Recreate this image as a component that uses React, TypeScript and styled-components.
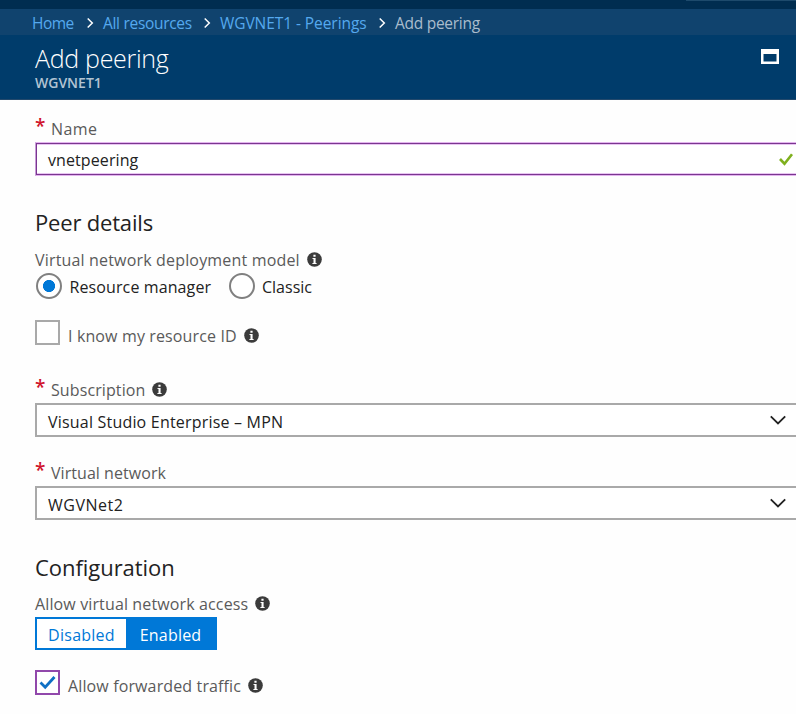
import React from "react";
import styled, { createGlobalStyle, css } from "styled-components";

const GlobalStyle = createGlobalStyle`
  * { box-sizing: border-box; }
  body { margin: 0; background: #fff; overflow: hidden; }
`;

const Page = styled.div`
  width: 100%;
  height: 714px;
  overflow: hidden;
  background: #fefefe;
  color: #222;
  font: 400 16px/24px "Open Sans", "Noto Sans", sans-serif;
`;

const TopBar = styled.div`
  display: flex;
  justify-content: flex-end;
  height: 9px;
  background: #002d50;
`;

const SearchEdge = styled.div`
  width: 110px;
  height: 1px;
  background: #1d4a6c;
`;

const Breadcrumbs = styled.nav`
  display: flex;
  align-items: center;
  height: 26px;
  padding: 2px 0 0 32px;
  background: #10436e;
  font-size: 15.5px;
  line-height: 24px;
  white-space: nowrap;
`;

const Crumb = styled.span<{ $width: number; $tracking: number; $current?: boolean }>`
  flex: none;
  width: ${(p) => p.$width}px;
  color: ${(p) => (p.$current ? "#a9bccd" : "#55a9ee")};
  letter-spacing: ${(p) => p.$tracking}px;
`;

const CrumbArrow = styled.svg`
  flex: none;
  width: 8px;
  height: 12px;
  margin: 0 9px 0 11px;
`;

const BladeHeader = styled.header`
  display: flex;
  justify-content: space-between;
  height: 65px;
  padding: 8px 17px 0 35px;
  background: #003c6b;
  border-bottom: 1px solid #23496c;
`;

const Title = styled.h1`
  margin: 0;
  color: #fff;
  font-size: 25px;
  font-weight: 300;
  line-height: 30px;
  letter-spacing: -0.3px;
`;

const Subtitle = styled.div`
  color: #b3c4d3;
  font-size: 14px;
  font-weight: 600;
  line-height: 19px;
`;

const WindowIcon = styled.svg`
  width: 18px;
  height: 15px;
  margin-top: 6px;
`;

const Form = styled.main`
  padding: 17px 0 0 35px;
`;

const Label = styled.div<{ $tracking?: number }>`
  display: flex;
  height: 24px;
  color: #5a5a5a;
  letter-spacing: ${(p) => p.$tracking ?? 0}px;
  white-space: nowrap;
`;

const Required = styled.span`
  width: 16px;
  color: #d0142c;
  font-size: 19px;
  font-weight: 600;
  line-height: 19px;
  letter-spacing: 0;
`;

const Info = styled.svg`
  flex: none;
  width: 15px;
  height: 15px;
  margin: 4px 0 0 7px;
`;

const focusedFrame = css`
  padding: 5px 0 0 12px;
  border: 1px solid #e3b4ee;
  border-left-color: #c79ad6;
  border-right: 0;
  box-shadow: inset 1px 0 0 #7a3690, inset 0 1px 0 #7a3690, inset 0 -1px 0 #7a3690,
    inset 0 2px 0 #e8c4f1, inset 0 -2px 0 #e8c4f1;
`;

const restingFrame = css`
  padding: 5px 0 0 11px;
  border: 2px solid #a9a9a9;
  border-right: 0;
`;

const Field = styled.div<{ $focused?: boolean; $tracking: number }>`
  display: flex;
  justify-content: space-between;
  height: 34px;
  margin-top: 1px;
  background: #fff;
  letter-spacing: ${(p) => p.$tracking}px;
  ${(p) => (p.$focused ? focusedFrame : restingFrame)}
`;

const ValidIcon = styled.svg`
  width: 16px;
  height: 14px;
  margin: 4px 2px 0 0;
`;

const Chevron = styled.svg`
  width: 18px;
  height: 12px;
  margin: 4px 9px 0 0;
`;

const Section = styled.section<{ $gap: number }>`
  margin-top: ${(p) => p.$gap}px;
`;

const Heading = styled.h2<{ $tracking: number; $after: number }>`
  margin: 0 0 ${(p) => p.$after}px;
  font-size: 22px;
  font-weight: 400;
  line-height: 30px;
  letter-spacing: ${(p) => p.$tracking}px;
`;

const RadioGroup = styled.div`
  display: flex;
  height: 26px;
  margin-top: 1px;
  padding-left: 1px;
`;

const RadioOption = styled.label<{ $width: number; $tracking: number }>`
  display: flex;
  gap: 7.5px;
  width: ${(p) => p.$width}px;
  line-height: 28px;
  letter-spacing: ${(p) => p.$tracking}px;
  white-space: nowrap;
`;

const Radio = styled.span<{ $checked?: boolean }>`
  flex: none;
  width: 26px;
  height: 26px;
  border: 2px solid #808080;
  border-radius: 50%;
  background: ${(p) => (p.$checked ? "radial-gradient(circle, #0078d7 5.7px, #fff 6.4px)" : "#fff")};
`;

const CheckRow = styled.div<{ $gap: number }>`
  display: flex;
  gap: 8px;
  margin-top: ${(p) => p.$gap}px;
  height: 25px;
`;

const CheckLabel = styled(Label)`
  margin-top: 4px;
`;

const CheckBox = styled.span<{ $checked?: boolean }>`
  display: grid;
  place-items: center;
  width: 25px;
  height: 25px;
  border: 2px solid ${(p) => (p.$checked ? "#9148ab" : "#a9a9a9")};
  background: #fff;
`;

const FieldGroup = styled.div<{ $gap: number }>`
  margin-top: ${(p) => p.$gap}px;
`;

const Toggle = styled.div`
  display: flex;
  width: 182px;
  height: 33px;
  margin-top: 1px;
  border: 2px solid #0078d7;
`;

const ToggleOption = styled.span<{ $active?: boolean; $tracking: number }>`
  flex: 1;
  padding-top: 4px;
  text-align: center;
  letter-spacing: ${(p) => p.$tracking}px;
  color: ${(p) => (p.$active ? "#fff" : "#0078d7")};
  background: ${(p) => (p.$active ? "#0078d7" : "#fff")};
`;

const InfoIcon = () => (
  <Info viewBox="0 0 15 15">
    <circle cx="7.5" cy="7.5" r="7.3" fill="#3b3b3b" />
    <path d="M6.4 2.7h2.2v2H6.4zM5.5 6h3.1v5h1v1.1H5.4V11h1.1V7.1h-1z" fill="#fff" />
  </Info>
);

const Arrow = () => (
  <CrumbArrow viewBox="0 0 8 12">
    <path d="M1.7 1.5 6.3 6 1.7 10.5" fill="none" stroke="#fff" strokeWidth="1.5" />
  </CrumbArrow>
);

const Down = () => (
  <Chevron viewBox="0 0 18 12">
    <path d="m1.8 2.3 7.2 7.2 7.2-7.2" fill="none" stroke="#222" strokeWidth="1.8" />
  </Chevron>
);

export default function App() {
  return (
    <Page>
      <GlobalStyle />
      <TopBar>
        <SearchEdge />
      </TopBar>
      <Breadcrumbs>
        <Crumb $width={43} $tracking={-0.5}>Home</Crumb>
        <Arrow />
        <Crumb $width={89} $tracking={-0.3}>All resources</Crumb>
        <Arrow />
        <Crumb $width={147} $tracking={-0.07}>WGVNET1 - Peerings</Crumb>
        <Arrow />
        <Crumb $width={88} $tracking={-0.27} $current>Add peering</Crumb>
      </Breadcrumbs>
      <BladeHeader>
        <div>
          <Title>Add peering</Title>
          <Subtitle>WGVNET1</Subtitle>
        </div>
        <WindowIcon viewBox="0 0 18 15">
          <path d="M0 0h18v15H0zM2.5 5v7.5h13V5z" fill="#fff" fillRule="evenodd" />
        </WindowIcon>
      </BladeHeader>
      <Form>
        <Label $tracking={0.4}>
          <Required>*</Required>Name
        </Label>
        <Field $focused $tracking={0.09}>
          vnetpeering
          <ValidIcon viewBox="0 0 16 14">
            <path d="m2 7 4.5 4.7L14 2.3" fill="none" stroke="#7fb01e" strokeWidth="2.6" />
          </ValidIcon>
        </Field>

        <Section $gap={31}>
          <Heading $tracking={-0.18} $after={11}>Peer details</Heading>
          <Label $tracking={0.17}>
            Virtual network deployment model <InfoIcon />
          </Label>
          <RadioGroup>
            <RadioOption $width={192.5} $tracking={0.11}>
              <Radio $checked />
              Resource manager
            </RadioOption>
            <RadioOption $width={90} $tracking={0}>
              <Radio />
              Classic
            </RadioOption>
          </RadioGroup>
          <CheckRow $gap={21}>
            <CheckBox />
            <CheckLabel $tracking={0.13}>
              I know my resource ID <InfoIcon />
            </CheckLabel>
          </CheckRow>
        </Section>

        <FieldGroup $gap={33}>
          <Label $tracking={0.1}>
            <Required>*</Required>Subscription <InfoIcon />
          </Label>
          <Field $tracking={0.2}>
            Visual Studio Enterprise – MPN
            <Down />
          </Field>
        </FieldGroup>

        <FieldGroup $gap={24}>
          <Label $tracking={0.05}>
            <Required>*</Required>Virtual network
          </Label>
          <Field $tracking={0.5}>
            WGVNet2
            <Down />
          </Field>
        </FieldGroup>

        <Section $gap={32}>
          <Heading $tracking={-0.05} $after={10}>Configuration</Heading>
          <Label $tracking={0.13}>
            Allow virtual network access <InfoIcon />
          </Label>
          <Toggle>
            <ToggleOption $tracking={0.25}>Disabled</ToggleOption>
            <ToggleOption $active $tracking={0.22}>Enabled</ToggleOption>
          </Toggle>
          <CheckRow $gap={20}>
            <CheckBox $checked>
              <svg width="17" height="15" viewBox="0 0 17 15">
                <path d="m1.5 7.5 4.7 4.7L15.5 2" fill="none" stroke="#0f70c4" strokeWidth="2.8" />
              </svg>
            </CheckBox>
            <CheckLabel $tracking={0.13}>
              Allow forwarded traffic <InfoIcon />
            </CheckLabel>
          </CheckRow>
        </Section>
      </Form>
    </Page>
  );
}
